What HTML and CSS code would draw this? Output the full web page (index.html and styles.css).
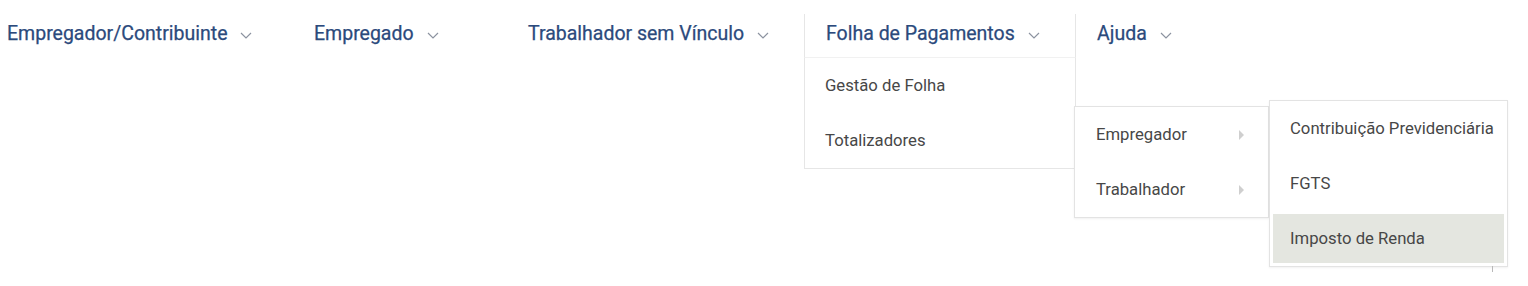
FILE: index.html
```html
<!DOCTYPE html>
<html lang="pt-BR">
<head>
<meta charset="utf-8">
<title>Menu</title>
<link rel="stylesheet" href="styles.css">
</head>
<body>
<nav class="menubar">
  <ul class="menu">
    <li class="menu-item item-1"><span class="label">Empregador/Contribuinte</span><svg class="chev" viewBox="0 0 12 7" width="12" height="7"><path d="M1 1l5 5 5-5"/></svg></li>
    <li class="menu-item item-2"><span class="label">Empregado</span><svg class="chev" viewBox="0 0 12 7" width="12" height="7"><path d="M1 1l5 5 5-5"/></svg></li>
    <li class="menu-item item-3"><span class="label">Trabalhador sem Vínculo</span><svg class="chev" viewBox="0 0 12 7" width="12" height="7"><path d="M1 1l5 5 5-5"/></svg></li>
    <li class="menu-item item-4 open"><span class="label">Folha de Pagamentos</span><svg class="chev" viewBox="0 0 12 7" width="12" height="7"><path d="M1 1l5 5 5-5"/></svg>
      <ul class="dropdown">
        <li class="drop-item">Gestão de Folha</li>
        <li class="drop-item has-sub">Totalizadores
          <ul class="submenu sub-2">
            <li class="sub-item has-sub">Empregador<span class="tri"></span>
              <ul class="submenu sub-3">
                <li class="sub-item">Contribuição Previdenciária</li>
                <li class="sub-item">FGTS</li>
                <li class="sub-item active"><span class="hl">Imposto de Renda</span></li>
              </ul>
            </li>
            <li class="sub-item">Trabalhador<span class="tri"></span></li>
          </ul>
        </li>
      </ul>
    </li>
    <li class="menu-item item-5"><span class="label">Ajuda</span><svg class="chev" viewBox="0 0 12 7" width="12" height="7"><path d="M1 1l5 5 5-5"/></svg></li>
  </ul>
</nav>
</body>
</html>
```

FILE: styles.css
```css
* { box-sizing: border-box; }
html, body { margin: 0; padding: 0; background: #fff; }
body {
  font-family: Roboto, "Liberation Sans", Arial, sans-serif;
  width: 1528px;
  height: 286px;
  overflow: hidden;
}
ul { list-style: none; margin: 0; padding: 0; }

.menubar { padding-top: 14px; }
.menu { display: flex; align-items: stretch; height: 43px; }

.menu-item {
  position: relative;
  display: flex;
  align-items: center;
  gap: 13px;
  padding: 0 0 4px 21px;
  height: 43px;
  border-left: 1px solid transparent;
  border-right: 1px solid transparent;
  color: #2b4a7c;
  font-size: 19.5px;
  font-weight: 400;
  -webkit-text-stroke: 0.25px #2b4a7c;
  white-space: nowrap;
}
.item-1 { width: 292px; padding-left: 7px; border-left: 0; }
.item-2 { width: 214px; }
.item-3 { width: 299px; }
.item-4 { width: 272px; margin-left: -1px; }
.item-5 { width: auto; margin-left: -1px; }

.menu-item.open {
  border-left-color: #e6e6e6;
  border-right-color: #e6e6e6;
}

.chev {
  flex: none;
  margin-top: 3px;
  width: 12px;
  height: 7px;
  fill: none;
  stroke: #8c93a0;
  stroke-width: 1.2;
}

.dropdown {
  position: absolute;
  top: 43px;
  left: -1px;
  width: 272px;
  background: #fff;
  border: 1px solid #e6e6e6;
  border-top: 1px solid #f1f1f1;
  -webkit-text-stroke: 0;
}
.drop-item, .sub-item {
  position: relative;
  display: flex;
  align-items: center;
  height: 55px;
  padding-left: 20px;
  color: #474747;
  font-size: 16.7px;
  font-weight: 400;
  -webkit-text-stroke: 0;
}

.submenu {
  position: absolute;
  background: #fff;
  border: 1px solid #e3e3e3;
  box-shadow: 0 1px 2px rgba(0,0,0,0.06);
}
.sub-2 {
  top: -7px;
  left: calc(100% - 1px);
  width: 195px;
}
.sub-2 > .sub-item { padding-left: 21px; }
.sub-3 {
  top: -7px;
  left: 194px;
  width: 239px;
}
.sub-3 > .sub-item { padding-left: 20px; }
.sub-3::after {
  content: "";
  position: absolute;
  left: 222px;
  bottom: -6px;
  width: 1px;
  height: 6px;
  background: #b8b8b8;
}

.tri {
  position: absolute;
  left: 164px;
  top: 23px;
  width: 0;
  height: 0;
  border-top: 5px solid transparent;
  border-bottom: 5px solid transparent;
  border-left: 5px solid #cfcfcf;
}

.sub-item.active { padding: 3px; }
.hl {
  display: flex;
  align-items: center;
  width: 100%;
  height: 100%;
  padding-left: 17px;
  background: #e4e6e0;
}
```
